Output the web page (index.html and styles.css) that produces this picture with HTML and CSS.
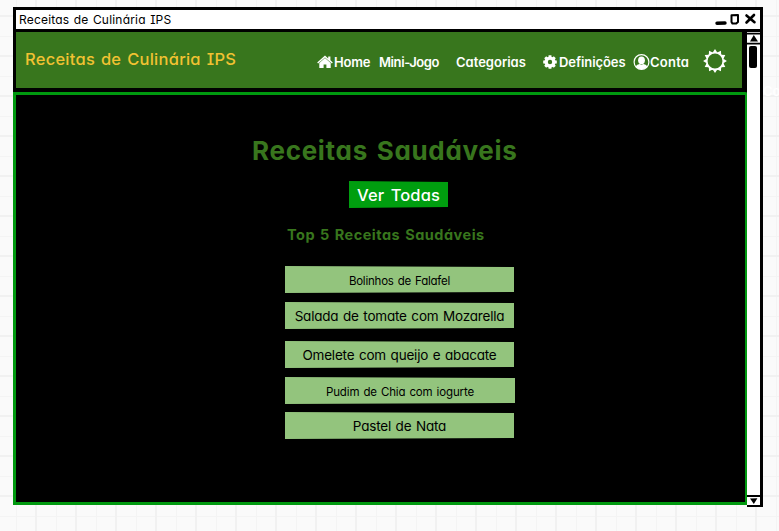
FILE: index.html
```
<!DOCTYPE html>
<html lang="pt">
<head>
<meta charset="utf-8">
<title>Receitas de Culinária IPS</title>
<link rel="stylesheet" href="styles.css">
</head>
<body>
<div class="window">
  <div class="titlebar">
    <span class="window-title">Receitas de Culinária IPS</span>
    <svg class="controls" width="46" height="20" viewBox="714 10 46 20">
      <path d="M717 23.3L725 23" stroke="#000" stroke-width="3.4" stroke-linecap="round"/>
      <path d="M731.5 15.3L738 15V22L736 23.6H732.5L731.5 22Z" fill="none" stroke="#000" stroke-width="2" stroke-linejoin="round"/>
      <path d="M746.5 15.5L754.5 22.2M754 15L746.5 22.5" stroke="#000" stroke-width="2.6" stroke-linecap="round"/>
    </svg>
  </div>
  <div class="viewport">
    <div class="page">
      <header class="header">
        <a class="brand">Receitas de Culinária IPS</a>
        <nav class="nav">
          <a class="link home">
            <svg width="16" height="14" viewBox="0 0 16 14" fill="#fff"><path d="M8 .6L11.2 3.4V1.4H13.4V5.3L15.8 7.6 14.9 8.6 8 2.4 1.1 8.6.2 7.6Z"/><path d="M8 3L13.7 8V13H9.4V9.6H6.6V13H2.3V8Z"/></svg><span>Home</span></a>
          <a class="link game"><span>Mini-Jogo</span></a>
          <a class="link categories"><span>Categorias</span></a>
          <a class="link settings">
            <svg width="16" height="14" viewBox="-8 -7 16 14" fill="none" stroke="#fff"><circle r="3.9" stroke-width="3.4"/><path d="M0-6.8V-4M0 6.8V4M-6.8 0H-4M6.8 0H4M-4.8-4.8L-3-3M4.8 4.8L3 3M-4.8 4.8L-3 3M4.8-4.8L3-3" stroke-width="2.9"/></svg><span>Definições</span></a>
          <a class="link account">
            <svg width="17" height="16" viewBox="-8.5 -8 17 16"><circle r="7.4" fill="none" stroke="#fff" stroke-width="1.2"/><ellipse cy="-1.7" rx="3.4" ry="3.9" fill="#fff"/><path d="M-5.8 4.2Q-4.6 2.5-1.8 2L0 2.8 1.8 2Q4.6 2.5 5.8 4.2A7 7 0 0 1-5.8 4.2Z" fill="#fff"/></svg><span>Conta</span></a>
          <svg class="sun" width="24" height="24" viewBox="-12 -12 24 24"><circle r="8.3" fill="none" stroke="#fff" stroke-width="1.7"/><path fill="#fff" d="M-2.3-8.4L0-11.9 2.3-8.4ZM-2.3 8.4L0 11.9 2.3 8.4ZM-8.4-2.3L-11.9 0-8.4 2.3ZM8.4-2.3L11.9 0 8.4 2.3Z"/><path transform="rotate(30)" fill="#fff" d="M-2.3-8.4L0-11.9 2.3-8.4ZM-2.3 8.4L0 11.9 2.3 8.4ZM-8.4-2.3L-11.9 0-8.4 2.3ZM8.4-2.3L11.9 0 8.4 2.3Z"/><path transform="rotate(60)" fill="#fff" d="M-2.3-8.4L0-11.9 2.3-8.4ZM-2.3 8.4L0 11.9 2.3 8.4ZM-8.4-2.3L-11.9 0-8.4 2.3ZM8.4-2.3L11.9 0 8.4 2.3Z"/></svg>
        </nav>
      </header>
      <main class="panel">
        <h1>Receitas Saudáveis</h1>
        <button class="all">Ver Todas</button>
        <h2>Top 5 Receitas Saudáveis</h2>
        <ul class="recipes">
          <li class="small falafel">Bolinhos de Falafel</li>
          <li class="salad">Salada de tomate com Mozarella</li>
          <li class="omelette">Omelete com queijo e abacate</li>
          <li class="small pudding">Pudim de Chia com iogurte</li>
          <li class="tart">Pastel de Nata</li>
        </ul>
      </main>
    </div>
    <div class="scrollbar">
      <svg class="arrow" width="13" height="13" viewBox="0 0 13 13"><path d="M0 1.6H13M0 11.6H13" stroke="#000" stroke-width="1.6"/><path d="M6.8 3L11 9.6H3Z"/></svg>
      <div class="thumb"></div>
      <svg class="arrow down" width="13" height="14" viewBox="0 0 13 14"><path d="M0 3H13M0 13H13" stroke="#000" stroke-width="2"/><path d="M3 5.6L10.4 5.2 6.8 11Z"/></svg>
    </div>
  </div>
</div>
<span class="stray">Co</span>
</body>
</html>
```
FILE: styles.css
```
* { box-sizing: border-box; }

body {
  margin: 0;
  width: 779px;
  height: 531px;
  padding: 7px 0 0 13px;
  overflow: hidden;
  position: relative;
  font-family: Inter, sans-serif;
  font-feature-settings: "cv11", "cv08", "ss03";
  white-space: nowrap;
  background-color: #fafafa;
  background-image:
    linear-gradient(90deg, #f1f1f1 2px, transparent 2px),
    linear-gradient(#f1f1f1 2px, transparent 2px),
    linear-gradient(90deg, #f4f4f4 1px, transparent 1px),
    linear-gradient(#f4f4f4 1px, transparent 1px);
  background-size: 40px 40px;
  background-position: 35px 0, 0 15px, 16px 0, 0 36px;
}

.window { width: 750px; height: 500px; }

.titlebar {
  display: flex;
  justify-content: space-between;
  height: 25px;
  border: 3px solid #000;
  background: #fff;
}

.window-title {
  margin-left: 3px;
  font-size: 12px;
  line-height: 19px;
  letter-spacing: 0.2px;
  word-spacing: 0.8px;
}

.viewport { display: flex; height: 475px; }

.page { width: 734px; height: 473px; background: #000; }

.header {
  display: flex;
  align-items: center;
  width: 726px;
  height: 56px;
  margin: 0 0 4px 3px;
  padding-left: 9px;
  background: #38761d;
}

.brand {
  width: 292px;
  padding-bottom: 2px;
  color: #f1c232;
  font-size: 16.5px;
  font-weight: 500;
  letter-spacing: 0.25px;
  word-spacing: 1.2px;
}

.nav {
  display: flex;
  align-items: center;
  padding-top: 3px;
  color: #fff;
  font-size: 13px;
  font-weight: 600;
}

.link { display: flex; align-items: center; flex: none; }
.home { width: 62px; letter-spacing: -0.2px; }
.game { width: 77px; letter-spacing: -0.4px; }
.categories { width: 86px; }
.settings { width: 91px; letter-spacing: -0.08px; }
.account { width: 70px; letter-spacing: 0.24px; }
.home svg, .settings svg { margin-right: 1px; }
.sun { margin-top: -2px; }

.panel {
  display: flex;
  flex-direction: column;
  width: 735px;
  height: 413px;
  padding-top: 38px;
  border: 3px solid #00990f;
  border-radius: 0 3px 0 0;
  background: #000;
}

h1, h2 { margin: 0; color: #38761d; }

h1 {
  margin-left: 236px;
  font-size: 26px;
  line-height: 36px;
  letter-spacing: 0.7px;
  word-spacing: 1.9px;
}

.all {
  width: 99px;
  height: 27px;
  margin: 12px 0 0 333px;
  padding: 0;
  border: 0;
  background: #009e0f;
  clip-path: polygon(0 0, 100% 1px, 100% 26px, 0 100%);
  color: #fff;
  font: 500 16.5px/28px Inter, sans-serif;
  font-feature-settings: inherit;
  letter-spacing: 0.1px;
  word-spacing: 2px;
}

h2 {
  margin: 17px 0 0 271px;
  font-size: 14.5px;
  line-height: 20px;
  letter-spacing: 0.5px;
  word-spacing: 1px;
}

.recipes {
  width: 229px;
  margin: 21px 0 0 269px;
  padding: 0;
  list-style: none;
}

.recipes li {
  height: 27px;
  margin-bottom: 9px;
  background: #93c47d;
  clip-path: polygon(0 0, 100% 1px, 100% 26px, 0 100%);
  font-size: 13.5px;
  line-height: 28px;
  letter-spacing: -0.2px;
  word-spacing: 1px;
  text-align: center;
}

.recipes .small { font-size: 11.5px; line-height: 30px; }
.recipes .falafel { letter-spacing: -0.22px; }
.recipes .salad { margin-bottom: 12px; }
.recipes .pudding { width: 230px; margin-bottom: 8px; letter-spacing: -0.15px; }

.scrollbar {
  display: flex;
  flex-direction: column;
  width: 16px;
  border-right: 3px solid #000;
  background: #fff;
}

.arrow { flex: none; }

.thumb {
  width: 8px;
  height: 22px;
  margin: 1px 0 0 2px;
  border-radius: 2px;
  background: #000;
}

.down { margin-top: auto; }

.stray {
  position: absolute;
  left: 763px;
  top: 83px;
  color: #fff;
  font-size: 13px;
  font-weight: 600;
}
```
